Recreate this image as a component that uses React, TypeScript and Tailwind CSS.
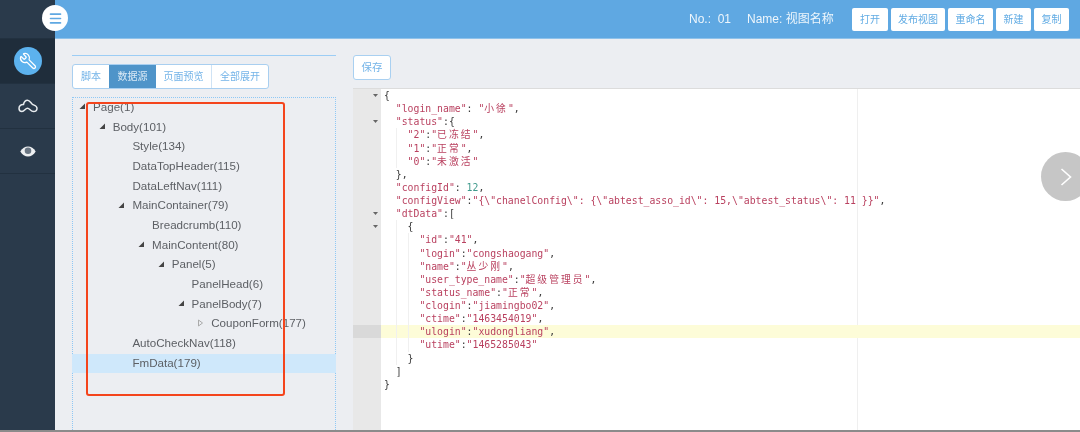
import { Menu, Wrench } from "lucide-react";

/* tree rows: depth + arrow type */
const treeRows = [
  { label: "Page(1)", depth: 0, arrow: "open" },
  { label: "Body(101)", depth: 1, arrow: "open" },
  { label: "Style(134)", depth: 2 },
  { label: "DataTopHeader(115)", depth: 2 },
  { label: "DataLeftNav(111)", depth: 2 },
  { label: "MainContainer(79)", depth: 2, arrow: "open" },
  { label: "Breadcrumb(110)", depth: 3 },
  { label: "MainContent(80)", depth: 3, arrow: "open" },
  { label: "Panel(5)", depth: 4, arrow: "open" },
  { label: "PanelHead(6)", depth: 5 },
  { label: "PanelBody(7)", depth: 5, arrow: "open" },
  { label: "CouponForm(177)", depth: 6, arrow: "closed" },
  { label: "AutoCheckNav(118)", depth: 2 },
  { label: "FmData(179)", depth: 2, active: true },
];

const codeLines = [
  { text: "{", indent: 0, fold: true },
  { text: '"login_name": "小徐",', indent: 1 },
  { text: '"status":{', indent: 1, fold: true },
  { text: '"2":"已冻结",', indent: 2 },
  { text: '"1":"正常",', indent: 2 },
  { text: '"0":"未激活"', indent: 2 },
  { text: "},", indent: 1 },
  { text: '"configId": 12,', indent: 1 },
  { text: '"configView":"{\\"chanelConfig\\": {\\"abtest_asso_id\\": 15,\\"abtest_status\\": 11 }}",', indent: 1 },
  { text: '"dtData":[', indent: 1, fold: true },
  { text: "{", indent: 2, fold: true },
  { text: '"id":"41",', indent: 3 },
  { text: '"login":"congshaogang",', indent: 3 },
  { text: '"name":"丛少刚",', indent: 3 },
  { text: '"user_type_name":"超级管理员",', indent: 3 },
  { text: '"status_name":"正常",', indent: 3 },
  { text: '"clogin":"jiamingbo02",', indent: 3 },
  { text: '"ctime":"1463454019",', indent: 3 },
  { text: '"ulogin":"xudongliang",', indent: 3, active: true },
  { text: '"utime":"1465285043"', indent: 3 },
  { text: "}", indent: 2 },
  { text: "]", indent: 1 },
  { text: "}", indent: 0 },
];

/* strings in red, bare numbers in teal, the rest dark */
function CodeText({ text }: { text: string }) {
  const parts = text.match(/"(?:\\.|[^"\\])*"|\d+|[^"\d]+/g) || [];
  return (
    <>
      {parts.map((p, i) => {
        if (p.startsWith('"')) {
          return (
            <span key={i} className="text-[#b9405f]">
              {p.split(/([\u4e00-\u9fff]+)/).map((s, j) =>
                j % 2 ? (
                  <span key={j} className="tracking-[2px]">
                    {s}
                  </span>
                ) : (
                  s
                )
              )}
            </span>
          );
        }
        if (/^\d+$/.test(p)) {
          return (
            <span key={i} className="text-[#3f9a8c]">
              {p}
            </span>
          );
        }
        return <span key={i}>{p}</span>;
      })}
    </>
  );
}

function TreeArrow({ type }: { type?: string }) {
  if (type === "open") {
    return (
      <svg width="7" height="7" viewBox="0 0 7 7" className="shrink-0">
        <path d="M6 .5v5.500H.5z" fill="#444" />
      </svg>
    );
  }
  if (type === "closed") {
    return (
      <svg width="7" height="8" viewBox="0 0 7 8" className="shrink-0">
        <path d="M1.500 1l4 3-4 3z" fill="none" stroke="#aaa" />
      </svg>
    );
  }
  return null;
}

function SideItem({ children, active }: { children: React.ReactNode; active?: boolean }) {
  return (
    <div className={`flex h-[45px] items-center justify-center border-b border-[#223140] ${active ? "bg-[#1f2d3b]" : ""}`}>
      {children}
    </div>
  );
}

export default function App() {
  return (
    <div className="relative flex h-[432px] w-[1080px] overflow-hidden bg-[#eceef2] font-['Liberation_Sans','Noto_Sans_CJK_SC',sans-serif] blur-[0.5px]">
      {/* SIDEBAR */}
      <aside className="w-[55px] shrink-0 bg-[#2a3a4b]">
        <div className="h-[39px] border-b border-[#223140]" />
        <SideItem active>
          <div className="flex h-[28px] w-[28px] items-center justify-center rounded-full bg-[#5cb2ee]">
            <Wrench size={18} strokeWidth={1.7} className="-scale-x-100 text-white" />
          </div>
        </SideItem>
        <SideItem>
          <svg width="20" height="14" viewBox="0 0 20 14" fill="none" stroke="#e8ecef" strokeWidth="1.500">
            <path d="M5.500 5.500C6 3 7.500 1.200 9.500 1.200c2.200 0 3 2.300 4.800 4 1.300 1.200 4.700 1.400 4.700 4 0 2-1.500 3.300-3.500 3.300-2.800 0-3.800-3.200-6-3.200s-3 3.200-5.500 3.200C2.300 12.500 1 11 1 9.200 1 6.800 3.200 5.200 5.500 5.500z" />
          </svg>
        </SideItem>
        <SideItem>
          <svg width="16" height="11" viewBox="0 0 16 11">
            <path d="M.3 5.500C2.300 2 5 .4 8 .4s5.700 1.600 7.700 5.100c-2 3.500-4.700 5.100-7.700 5.100S2.300 9 .3 5.500z" fill="#eef0f2" />
            <circle cx="8" cy="4.700" r="3.300" fill="#6a7683" />
            <path d="M3.200 7c1.300 1.600 3 2.200 4.800 2.200S11.500 8.600 12.800 7" fill="none" stroke="#eef0f2" strokeWidth="1" />
          </svg>
        </SideItem>
      </aside>

      <div className="flex min-w-0 flex-1 flex-col">
        {/* HEADER */}
        <header className="flex h-[39px] shrink-0 items-center border-b border-[#8fc2ea] bg-[#5fa8e2] pr-[11px] text-white">
          <div className="ml-auto flex items-center text-[12px] text-[#eef6fc]">
            <span className="w-[58px]">No.:&nbsp;&nbsp;01</span>
            <span className="w-[105px]">Name:&nbsp;视图名称</span>
          </div>
          <div className="flex gap-[3px]">
            {[
              ["打开", "w-[36px]"],
              ["发布视图", "w-[54px]"],
              ["重命名", "w-[45px]"],
              ["新建", "w-[35px]"],
              ["复制", "w-[35px]"],
            ].map(([label, w]) => (
              <button key={label} className={`${w} h-[23px] rounded-[2px] bg-white text-[10px] text-[#62ace4]`}>
                {label}
              </button>
            ))}
          </div>
        </header>

        <main className="flex min-h-0 flex-1 gap-[17px] pl-[17px]">
          {/* TREE PANEL */}
          <section className="flex w-[264px] shrink-0 flex-col pt-[16px]">
            <div className="h-px bg-[#9ccdf5]" />
            <div className="mt-[8px] flex h-[25px] w-[197px] overflow-hidden rounded-[3px] border border-[#a9cff0] bg-white text-[10px] text-[#74b4e8]">
              <span className="flex w-[36px] items-center justify-center">脚本</span>
              <span className="flex w-[47px] items-center justify-center bg-[#4f94c9] text-[#dbeaf6]">数据源</span>
              <span className="flex w-[56px] items-center justify-center border-r border-[#cfe3f5]">页面预览</span>
              <span className="flex flex-1 items-center justify-center">全部展开</span>
            </div>

            <div className="mt-[8px] flex-1 border-x border-t border-dotted border-[#8fc8f5] text-[11.600px] text-[#5c5f64]">
              {treeRows.map((row) => (
                <div
                  key={row.label}
                  className={`-mx-px flex h-[19.67px] items-center pb-[2px] ${row.active ? "bg-[#cfe8fb]" : ""}`}
                  style={{ paddingLeft: 21 + row.depth * 19.7 }}
                >
                  <span className="-ml-[14px] mr-[7px] flex w-[7px] justify-center">
                    <TreeArrow type={row.arrow} />
                  </span>
                  {row.label}
                </div>
              ))}
            </div>
          </section>

          {/* EDITOR PANEL */}
          <section className="flex min-w-0 flex-1 flex-col pt-[16px]">
            <button className="h-[25px] w-[38px] rounded-[3px] border border-[#a9d0f1] bg-white text-[10.500px] text-[#74b4e8]">
              保存
            </button>
            <div className="relative mt-[8px] flex-1 overflow-hidden border-t border-[#dcdcdc] bg-white font-['DejaVu_Sans_Mono','Noto_Sans_CJK_SC',monospace] text-[9.800px] leading-[13.130px] text-[#3a3a3a]">
              {/* print margin */}
              <div className="absolute inset-y-0 left-[504px] w-px bg-[#efefef]" />
              <div className="absolute inset-y-0 left-0 w-[28px] bg-[#e8e8e8]" />
              <div className="relative">
                {codeLines.map((line, i) => (
                  <div key={i} className="flex h-[13.130px]">
                    <div className={`flex w-[28px] shrink-0 items-center justify-end pr-[3px] ${line.active ? "bg-[#d9d9d9]" : ""}`}>
                      {line.fold && (
                        <svg width="5" height="3" viewBox="0 0 5 3">
                          <path d="M0 0h5L2.500 3z" fill="#666" />
                        </svg>
                      )}
                    </div>
                    <div className={`flex flex-1 whitespace-pre pl-[3px] ${line.active ? "bg-[#fdfcd8]" : ""}`}>
                      {Array.from({ length: line.indent }).map((_, k) => (
                        <span key={k} className={`w-[11.800px] shrink-0 ${k > 0 ? "border-l border-[#f0f0f0]" : ""}`} />
                      ))}
                      <span>
                        <CodeText text={line.text} />
                      </span>
                    </div>
                  </div>
                ))}
              </div>
            </div>
            <div className="h-[2px] shrink-0" />
          </section>
        </main>
      </div>

      {/* hamburger sits over the sidebar/header edge */}
      <div className="absolute left-[42px] top-[5px] flex h-[26px] w-[26px] items-center justify-center rounded-full bg-white">
        <Menu size={15} strokeWidth={2.600} className="text-[#5fa8e2]" />
      </div>

      {/* red annotation box */}
      <div className="absolute left-[86px] top-[102px] h-[294px] w-[199px] rounded-[3px] border-2 border-[#f4441c]" />

      {/* next arrow */}
      <div className="absolute left-[1041px] top-[152px] flex h-[49px] w-[49px] items-center rounded-full bg-[#c6c6c6] pl-[19px]">
        <svg width="12" height="18" viewBox="0 0 12 18" fill="none" stroke="#fff" strokeWidth="1.600">
          <path d="M1.500 1l9 8-9 8" />
        </svg>
      </div>

      {/* bottom edge of the capture */}
      <div className="absolute inset-x-0 bottom-0 h-[2px] bg-[#8b8b8b]" />
    </div>
  );
}
